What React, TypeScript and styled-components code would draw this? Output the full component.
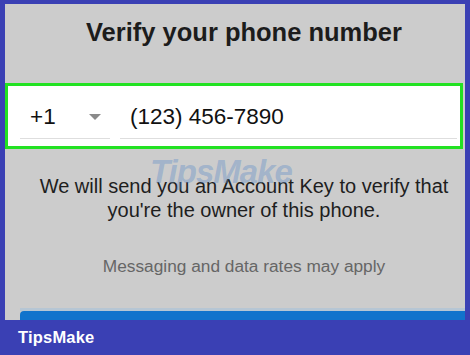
import React from "react";
import styled, { createGlobalStyle, css } from "styled-components";

const Global = createGlobalStyle`
  html, body { margin: 0; padding: 0; }
  body { background: #3a40b4; font-family: "Liberation Sans", Arial, sans-serif; }
  #root { width: 470px; height: 355px; overflow: hidden; }
  * { box-sizing: border-box; }
`;

const offCenter = css`
  padding-left: 18px;
`;

const Frame = styled.div`
  width: 470px;
  height: 355px;
  background: #3a40b4;
  display: flex;
  flex-direction: column;
  position: relative;
`;

const Panel = styled.div`
  margin: 4px 5px 0 5px;
  height: 316px;
  background: #cccccc;
  display: flex;
  flex-direction: column;
  align-items: center;
  overflow: hidden;
`;

const Title = styled.h1`
  ${offCenter}
  margin: 13px 0 0 0;
  font-size: 25.5px;
  line-height: 30px;
  font-weight: 700;
  color: #1c1c1c;
  white-space: nowrap;
`;

const InputBox = styled.div`
  align-self: stretch;
  margin: 36px 2px 0 0;
  height: 66px;
  border: 3px solid #22e222;
  background: #ffffff;
  display: flex;
  align-items: flex-start;
  gap: 10px;
  padding: 0 3px 0 12px;
`;

const Field = styled.div<{ $w?: number }>`
  ${(p) => (p.$w ? `width: ${p.$w}px;` : "flex: 1;")}
  display: flex;
  align-items: flex-end;
  justify-content: space-between;
  height: 53px;
  border-bottom: 1px solid #dedede;
  padding: 0 10px 8px 10px;
  font-size: 22.5px;
  line-height: 26px;
  color: #111;
`;

const Arrow = styled.span`
  width: 0;
  height: 0;
  border-left: 6px solid transparent;
  border-right: 6px solid transparent;
  border-top: 6px solid #8a8a8a;
  margin: 0 -1px 10px 0;
`;

const Body = styled.p`
  ${offCenter}
  margin: 25px 0 0 0;
  font-size: 20px;
  line-height: 24px;
  text-align: center;
  color: #1e1e1e;
  white-space: nowrap;
`;

const Note = styled.p`
  ${offCenter}
  margin: 34px 0 0 0;
  font-size: 17.3px;
  line-height: 20px;
  text-align: center;
  color: #666666;
  white-space: nowrap;
`;

const ButtonStrip = styled.div`
  align-self: stretch;
  margin: 32px 0 0 15px;
  border-top: 3px solid #b6c6d4;
  flex: 1;
  display: flex;
`;

const Button = styled.div`
  flex: 1;
  background: #1173cc;
  border-top-left-radius: 4px;
`;

const Footer = styled.div`
  flex: 1;
  display: flex;
  align-items: center;
  padding-left: 18px;
  color: #ffffff;
  font-weight: 700;
  font-size: 16.5px;
  letter-spacing: 0.2px;
`;

const Watermark = styled.div`
  position: absolute;
  left: 150px;
  top: 153px;
  font-size: 33px;
  font-weight: 700;
  font-style: italic;
  color: rgba(95, 140, 200, 0.4);
  letter-spacing: -1px;
  pointer-events: none;
`;

export default function App() {
  return (
    <Frame>
      <Global />
      <Panel>
        <Title>Verify your phone number</Title>
        <InputBox>
          <Field $w={90}>
            <span>+1</span>
            <Arrow />
          </Field>
          <Field>(123) 456-7890</Field>
        </InputBox>
        <Body>
          We will send you an Account Key to verify that
          <br />
          you're the owner of this phone.
        </Body>
        <Note>Messaging and data rates may apply</Note>
        <ButtonStrip>
          <Button />
        </ButtonStrip>
      </Panel>
      <Footer>TipsMake</Footer>
      <Watermark>TipsMake</Watermark>
    </Frame>
  );
}
